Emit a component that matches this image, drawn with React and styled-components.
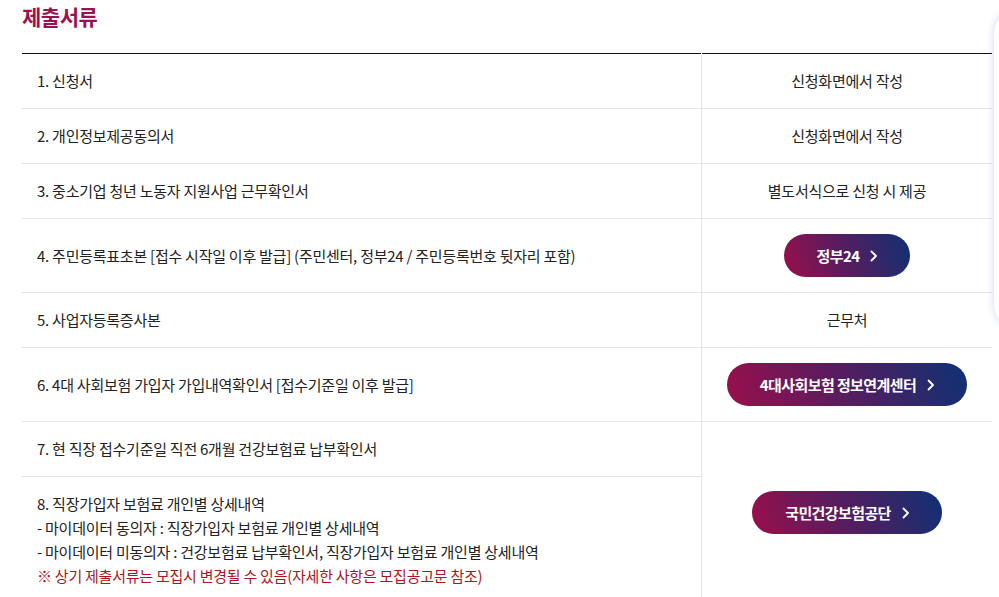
import React from 'react';
import styled, { createGlobalStyle } from 'styled-components';

const Global = createGlobalStyle`
  html, body { margin: 0; padding: 0; background: #fff; }
  body {
    font-family: "Noto Sans CJK KR", "Noto Sans", sans-serif;
    color: #222;
    overflow: hidden;
  }
`;

const Page = styled.div`
  padding: 0 7px 0 22px;
  width: 970px;
`;

const Title = styled.h3`
  margin: 0;
  font-size: 21px;
  line-height: 32px;
  font-weight: 700;
  color: #9b1150;
  letter-spacing: -0.5px;
  margin-bottom: 21px;
`;

const Table = styled.table`
  width: 100%;
  border-collapse: collapse;
  border-top: 1px solid #111;
  font-size: 15px;
  line-height: 24px;
  letter-spacing: -0.25px;
`;

const Row = styled.tr`
  border-bottom: 1px solid #e4e4ec;
`;

const Doc = styled.td`
  padding: 15px 15px;
  width: 649px;
  vertical-align: middle;
  color: #222;
`;

const Where = styled.td`
  padding: 15px 10px;
  text-align: center;
  vertical-align: middle;
  border-left: 1px solid #e4e4ec;
  color: #222;
`;

const Note = styled.div`
  color: #ad1420;
`;

const LinkButton = styled.a`
  display: inline-flex;
  align-items: center;
  gap: 11px;
  height: 43px;
  padding: 0 32px 0 33px;
  border-radius: 22px;
  background: linear-gradient(70deg, #9a0f4b 0%, #5a1c5e 45%, #0e3174 100%);
  color: #fff;
  font-size: 15px;
  font-weight: 700;
  letter-spacing: -0.6px;
  text-decoration: none;
  cursor: pointer;
`;

const SidePanel = styled.div`
  position: fixed;
  left: 994px;
  top: 8px;
  width: 60px;
  height: 322px;
  border-radius: 26px;
  background: #fff;
  box-shadow: 0 0 8px rgba(90, 130, 225, 0.3);
`;

const Chevron = () => (
  <svg width="8" height="12" viewBox="0 0 8 12" fill="none">
    <path d="M1.5 1.5 L6 6 L1.5 10.5" stroke="#fff" strokeWidth="1.8" strokeLinecap="round" strokeLinejoin="round" />
  </svg>
);

const Go = ({ children }) => (
  <LinkButton>
    {children}
    <Chevron />
  </LinkButton>
);

export default function App() {
  return (
    <>
      <Global />
      <Page>
        <Title>제출서류</Title>
        <Table>
          <tbody>
            <Row>
              <Doc>1. 신청서</Doc>
              <Where>신청화면에서 작성</Where>
            </Row>
            <Row>
              <Doc>2. 개인정보제공동의서</Doc>
              <Where>신청화면에서 작성</Where>
            </Row>
            <Row>
              <Doc>3. 중소기업 청년 노동자 지원사업 근무확인서</Doc>
              <Where>별도서식으로 신청 시 제공</Where>
            </Row>
            <Row>
              <Doc>4. 주민등록표초본 [접수 시작일 이후 발급] (주민센터, 정부24 / 주민등록번호 뒷자리 포함)</Doc>
              <Where><Go>정부24</Go></Where>
            </Row>
            <Row>
              <Doc>5. 사업자등록증사본</Doc>
              <Where>근무처</Where>
            </Row>
            <Row>
              <Doc>6. 4대 사회보험 가입자 가입내역확인서 [접수기준일 이후 발급]</Doc>
              <Where><Go>4대사회보험 정보연계센터</Go></Where>
            </Row>
            <Row>
              <Doc>7. 현 직장 접수기준일 직전 6개월 건강보험료 납부확인서</Doc>
              <Where rowSpan={2}><Go>국민건강보험공단</Go></Where>
            </Row>
            <Row>
              <Doc>
                <div>8. 직장가입자 보험료 개인별 상세내역</div>
                <div>- 마이데이터 동의자 : 직장가입자 보험료 개인별 상세내역</div>
                <div>- 마이데이터 미동의자 : 건강보험료 납부확인서, 직장가입자 보험료 개인별 상세내역</div>
                <Note>※ 상기 제출서류는 모집시 변경될 수 있음(자세한 사항은 모집공고문 참조)</Note>
              </Doc>
            </Row>
          </tbody>
        </Table>
      </Page>
      <SidePanel />
    </>
  );
}
